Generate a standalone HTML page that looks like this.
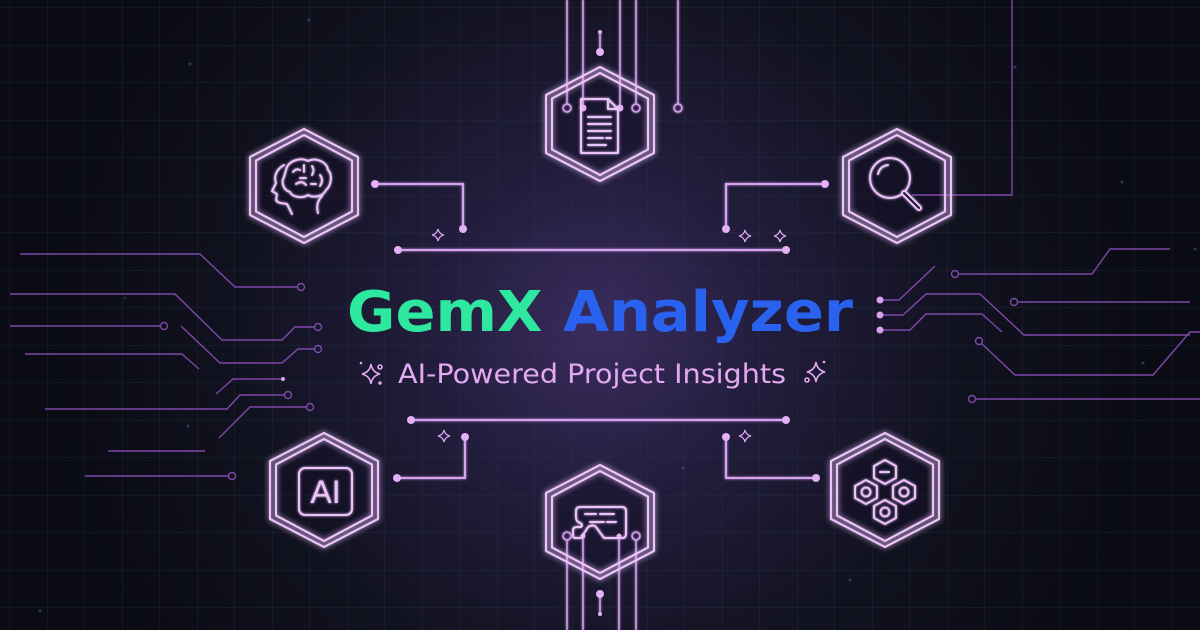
<!DOCTYPE html>
<html><head><meta charset="utf-8"><style>
html,body{margin:0;padding:0;background:#0b0c18;width:1200px;height:630px;overflow:hidden;}
svg{display:block}
</style></head><body>
<svg width="1200" height="630" viewBox="0 0 1200 630" xmlns="http://www.w3.org/2000/svg">
<defs>
<radialGradient id="bg" cx="600" cy="330" r="560" gradientUnits="userSpaceOnUse">
<stop offset="0" stop-color="#3a2c5e"/>
<stop offset="0.3" stop-color="#221d3c"/>
<stop offset="0.65" stop-color="#11121f"/>
<stop offset="1" stop-color="#0a0b14"/>
</radialGradient>
<pattern id="grid" width="37.5" height="37.5" patternUnits="userSpaceOnUse" x="10" y="8">
<path d="M37.5 0V37.5M0 37.5H37.5" stroke="#2a4050" stroke-width="1" fill="none" opacity="0.45"/>
</pattern>
<filter id="glow" x="-30%" y="-30%" width="160%" height="160%">
<feGaussianBlur stdDeviation="3" result="b"/>
<feMerge><feMergeNode in="b"/><feMergeNode in="SourceGraphic"/></feMerge>
</filter>
<filter id="soft" x="-10%" y="-10%" width="120%" height="120%">
<feGaussianBlur stdDeviation="1.2" result="b"/>
<feMerge><feMergeNode in="b"/><feMergeNode in="SourceGraphic"/></feMerge>
</filter>
<g id="hex">
<polygon points="0,-57 54,-29 54,29 0,57 -54,29 -54,-29" fill="none"/>
<polygon points="0,-51 48,-25.5 48,25.5 0,51 -48,25.5 -48,-25.5" fill="none"/>
</g>
<polygon id="hexfill" points="0,-57 54,-29 54,29 0,57 -54,29 -54,-29"/>
<path id="spark" d="M0,-6 Q1,-1 6,0 Q1,1 0,6 Q-1,1 -6,0 Q-1,-1 0,-6Z"/>
</defs>
<rect width="1200" height="630" fill="url(#bg)"/>
<rect width="1200" height="630" fill="url(#grid)"/>
<g fill="#3a5a9a" opacity="0.6">
<circle cx="190" cy="64" r="1.5"/><circle cx="309" cy="20" r="1.5"/><circle cx="1015" cy="67" r="1.5"/><circle cx="1122" cy="182" r="1.5"/><circle cx="1195" cy="249" r="1.5"/><circle cx="188" cy="426" r="1.5"/><circle cx="40" cy="611" r="1.5"/><circle cx="683" cy="468" r="1.5"/><circle cx="125" cy="298" r="1"/><circle cx="1143" cy="363" r="1.5"/><circle cx="850" cy="580" r="1.5"/>
</g>

<g fill="#150f28" opacity="0.35">
<use href="#hexfill" x="304" y="186"/><use href="#hexfill" x="600" y="124"/><use href="#hexfill" x="897" y="186"/>
<use href="#hexfill" x="324" y="490"/><use href="#hexfill" x="600" y="522"/><use href="#hexfill" x="885" y="490"/>
</g>

<g stroke="#8a4fb8" stroke-width="1.4" fill="none" opacity="0.9">
<path d="M20,254H200L235,287H297"/><circle cx="301" cy="287" r="3.5"/>
<path d="M10,294H175L222,340H282L295,327H314"/><circle cx="318" cy="327" r="3.5"/>
<path d="M10,326H160"/><circle cx="164" cy="326" r="3.5"/>
<path d="M181,326L220,363H282L298,349H314"/><circle cx="318" cy="349" r="3.5"/>
<path d="M25,354H182L199,369"/>
<path d="M216,394L233,379H283"/>
<path d="M45,409H227L240,395H284"/><circle cx="288" cy="395" r="3.5"/>
<path d="M219,438L250,407H306"/><circle cx="310" cy="407" r="3.5"/>
<path d="M108,451H205"/>
<path d="M85,476H228"/><circle cx="232" cy="476" r="3.5"/>
<path d="M880,300H899L935,266"/>
<path d="M880,315H903L926,294H980L1024,335H1190"/>
<path d="M880,330H910L926,314H982L1002,332"/>
<circle cx="955" cy="274" r="3.5"/><path d="M959,274H1092L1110,249H1170"/>
<circle cx="1014" cy="302" r="3.5"/><path d="M1018,302H1190"/>
<circle cx="979" cy="341" r="3.5"/><path d="M982,344L1015,375H1153L1190,332H1200"/>
<circle cx="972" cy="399" r="3.5"/><path d="M976,399H1200"/>
<path d="M912,195H1012V0"/>
</g>
<g fill="#d9a0f0"><circle cx="880" cy="300" r="3.5"/><circle cx="880" cy="315" r="3.5"/><circle cx="880" cy="330" r="3.5"/><circle cx="283" cy="379" r="2"/></g>

<g stroke="#d7a2f0" stroke-width="2" fill="none" filter="url(#soft)">
<path d="M398,250H786"/>
<path d="M375,184H463V229"/>
<path d="M825,184H726V229"/>
<path d="M411,420H786"/>
<path d="M397,478H465V437"/>
<path d="M726,437V478H816"/>
<path d="M567,0V104M583,0V108M620,0V108M636,0V104M678,0V104" stroke-width="1.5"/>
<circle cx="567" cy="108" r="4" stroke-width="1.5"/><circle cx="636" cy="108" r="4" stroke-width="1.5"/><circle cx="678" cy="108" r="4" stroke-width="1.5"/>
<path d="M600,32V52" stroke-width="1.5"/>
<path d="M567,540V630M583,536V630M619,536V630M636,540V630" stroke-width="1.5"/>
<circle cx="567" cy="536" r="4" stroke-width="1.5"/><circle cx="636" cy="536" r="4" stroke-width="1.5"/>
<path d="M600,594V614" stroke-width="1.5"/>
</g>
<g fill="#e2b0f5">
<circle cx="398" cy="250" r="4"/><circle cx="786" cy="250" r="4"/><circle cx="375" cy="184" r="4"/><circle cx="463" cy="229" r="4"/><circle cx="825" cy="184" r="4"/><circle cx="726" cy="229" r="4"/>
<circle cx="411" cy="420" r="4"/><circle cx="786" cy="420" r="4"/><circle cx="397" cy="478" r="4"/><circle cx="465" cy="437" r="4"/><circle cx="726" cy="437" r="4"/><circle cx="816" cy="478" r="4"/>
<circle cx="583" cy="108" r="3.5"/><circle cx="620" cy="108" r="3.5"/><circle cx="600" cy="52" r="4"/><circle cx="600" cy="32" r="2"/>
<circle cx="583" cy="536" r="2.5"/><circle cx="619" cy="536" r="2.5"/><circle cx="600" cy="594" r="4"/><circle cx="600" cy="614" r="2"/>
</g>
<g fill="none" stroke="#d7a2f0" stroke-width="1.3">
<use href="#spark" x="438" y="235"/><use href="#spark" x="745" y="236"/><use href="#spark" x="780" y="236"/>
<use href="#spark" x="444" y="436"/><use href="#spark" x="745" y="436"/>
</g>

<g stroke="#ecc4fb" stroke-width="2.2" fill="none" stroke-linejoin="round" stroke-linecap="round" filter="url(#glow)">
<use href="#hex" x="304" y="186"/>
<use href="#hex" x="600" y="124"/>
<use href="#hex" x="897" y="186"/>
<use href="#hex" x="324" y="490"/>
<use href="#hex" x="600" y="522"/>
<use href="#hex" x="885" y="490"/>
</g>

<g stroke="#ecc4fb" stroke-width="2" fill="none" stroke-linejoin="round" stroke-linecap="round" filter="url(#soft)">
<path d="M284,165C275,170 274,178 276,183L272,191 277,194 276,200C278,204 284,203 287,204 L292,214"/>
<path d="M318,213C316,206 318,200 322,196"/>
<path d="M286,170C288,160 302,157 308,161C316,157 327,162 328,170C333,175 331,186 326,190C323,197 313,198 308,195C302,199 292,197 290,192C283,190 281,182 284,177Z"/>
<path d="M293,172Q296,168 300,170M304,165V172M312,166Q315,170 312,175M320,175Q324,180 320,186M296,184Q302,180 306,185M311,184H316M300,178H306"/>
<path d="M581,99H608L618,109V153H581Z"/><path d="M608,99V109H618"/>
<path d="M588,117H611M588,124H611M588,131H611M588,138H603M606,138H611M588,145H606"/>
<circle cx="890" cy="178" r="20"/><path d="M878,174Q880,166 888,165"/>
<path d="M904,193L919,208" stroke-width="6"/><path d="M904,193L919,208" stroke="#1a1530" stroke-width="2"/>
<rect x="299" y="468" width="53" height="47" rx="6"/>
<path d="M576,511Q576,507 580,507H622Q626,507 626,511V534Q626,538 622,538H604L596,527Q593,524 588,527L581,538H575Q573,538 573,535V530Q573,527 577,527H581Q584,524 578,522Q576,520 576,517Z"/>
<path d="M585,514H596M600,514H614M590,522H604M607,522H616"/>
<polygon points="885,460 896,466 896,478 885,484 874,478 874,466"/>
<path d="M880,472H890" stroke-dasharray="2 1.5"/>
<polygon points="866,480 877,486 877,498 866,504 855,498 855,486"/><circle cx="866" cy="492" r="4.5"/>
<polygon points="904,480 915,486 915,498 904,504 893,498 893,486"/><circle cx="904" cy="492" r="4.5"/>
<polygon points="885,500 896,506 896,518 885,524 874,518 874,506"/><circle cx="885" cy="512" r="4.5"/>
</g>
<text x="325.5" y="503" font-family="'Liberation Sans',sans-serif" font-size="32" fill="#ecc4fb" text-anchor="middle" filter="url(#soft)">AI</text>

<text x="600" y="331" text-anchor="middle" font-family="'DejaVu Sans',sans-serif" font-weight="bold" font-size="56" textLength="506" lengthAdjust="spacingAndGlyphs"><tspan fill="#2ee8a0">GemX</tspan><tspan fill="#2a62f0"> Analyzer</tspan></text>
<text x="592" y="383" text-anchor="middle" font-family="'DejaVu Sans',sans-serif" font-size="27" fill="#e3a9f2" textLength="388" lengthAdjust="spacingAndGlyphs">AI-Powered Project Insights</text>
<g fill="none" stroke="#e3a9f2" stroke-width="1.6">
<path d="M371,364 Q372,372 380,374 Q372,376 371,384 Q370,376 362,374 Q370,372 371,364Z"/>
<circle cx="380" cy="367" r="2"/><circle cx="380" cy="383" r="1"/>
<path d="M816,362 Q817,370 825,372 Q817,374 816,382 Q815,374 807,372 Q815,370 816,362Z"/>
<circle cx="807" cy="380" r="2"/>
</g>
<g fill="#e3a9f2"><circle cx="361" cy="363" r="1.3"/><circle cx="824" cy="362" r="1.3"/></g>
</svg>
</body></html>
